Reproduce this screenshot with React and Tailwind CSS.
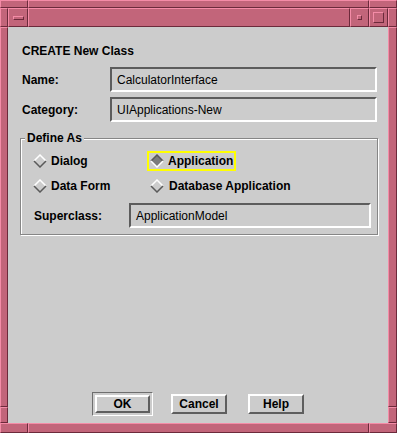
import React from "react";

// Bevel strips for the pink window frame
const frameBevel =
  "border border-t-[#f48ca7] border-l-[#f48ca7] border-b-[#6c2a3b] border-r-[#6c2a3b] bg-[#c2657a]";

const Diamond = ({ selected }) => (
  <svg width="14" height="14" viewBox="0 0 14 14" className="shrink-0">
    <polygon points="7,1 13,7 7,13 1,7" fill={selected ? "#7c7c7c" : "#cccccc"} />
    <polyline
      points="1,7 7,1 13,7"
      fill="none"
      stroke={selected ? "#5a5a5a" : "#ffffff"}
      strokeWidth="1.5"
    />
    <polyline
      points="1,7 7,13 13,7"
      fill="none"
      stroke={selected ? "#ffffff" : "#5a5a5a"}
      strokeWidth="1.5"
    />
  </svg>
);

const Field = ({ value, className = "" }) => (
  <div
    className={`h-[25px] flex items-center pl-[5px] border-2 border-t-[#5c5c5c] border-l-[#5c5c5c] border-b-white border-r-white text-[12px] ${className}`}
  >
    {value}
  </div>
);

const Btn = ({ children, className = "" }) => (
  <div
    className={`flex items-center justify-center border-2 border-t-white border-l-white border-b-[#5e5e5e] border-r-[#5e5e5e] font-bold text-[12px] ${className}`}
  >
    {children}
  </div>
);

export default function App() {
  return (
    <div className="w-[397px] h-[433px] flex flex-col font-['Liberation_Sans',Arial,sans-serif] text-black">
      {/* top frame */}
      <div className="flex h-[8px]">
        <div className={`w-[28px] ${frameBevel}`} />
        <div className={`flex-1 ${frameBevel}`} />
        <div className={`w-[28px] ${frameBevel}`} />
      </div>

      <div className="flex flex-1 min-h-0">
        {/* left frame */}
        <div className="w-[8px] flex flex-col">
          <div className={`h-[19px] ${frameBevel}`} />
          <div className={`flex-1 ${frameBevel}`} />
          <div className={`h-[16px] ${frameBevel}`} />
        </div>

        <div className="w-[380px] flex flex-col">
          {/* title bar */}
          <div className="flex h-[19px]">
            <div className={`w-[20px] flex items-center justify-center ${frameBevel}`}>
              <div className={`w-[11px] h-[4px] ${frameBevel}`} />
            </div>
            <div className={`flex-1 ${frameBevel}`} />
            <div className={`w-[19px] flex items-center justify-center ${frameBevel}`}>
              <div className={`w-[5px] h-[5px] ${frameBevel}`} />
            </div>
            <div className={`w-[19px] flex items-center justify-center ${frameBevel}`}>
              <div className={`w-[11px] h-[11px] ${frameBevel}`} />
            </div>
          </div>

          {/* dialog body */}
          <div className="flex-1 bg-[#cccccc] flex flex-col pl-[12px] pr-[10px] pt-[17px]">
            <div className="pl-[2px] font-bold text-[12px] leading-[14px]">CREATE New Class</div>

            <div className="flex items-center mt-[9px] pl-[2px]">
              <span className="w-[88px] font-bold text-[12px]">Name:</span>
              <Field value="CalculatorInterface" className="flex-1 mr-[1px]" />
            </div>
            <div className="flex items-center mt-[5px] pl-[2px]">
              <span className="w-[88px] font-bold text-[12px]">Category:</span>
              <Field value="UIApplications-New" className="flex-1 mr-[1px]" />
            </div>

            <fieldset className="mt-[9px] p-0 border border-[#868686] shadow-[inset_1px_1px_0_#ffffff,1px_1px_0_#ffffff]">
              <legend className="ml-[4px] px-[2px] bg-[#cccccc] font-bold text-[12px] leading-[14px]">
                Define As
              </legend>
              <div className="pl-[12px] pr-[6px] pb-[6px] text-[12px] font-bold">
                <div className="flex items-center h-[20px] mt-[6px]">
                  <div className="w-[114px] flex items-center gap-[4px]">
                    <Diamond />
                    <span>Dialog</span>
                  </div>
                  <div className="h-[20px] flex items-center gap-[4px] border-2 border-[#ffff00] pl-[1px] pr-[1px]">
                    <Diamond selected />
                    <span>Application</span>
                  </div>
                </div>
                <div className="flex items-center h-[20px] mt-[5px]">
                  <div className="w-[114px] flex items-center gap-[4px]">
                    <Diamond />
                    <span>Data Form</span>
                  </div>
                  <div className="flex items-center gap-[5px] pl-[3px]">
                    <Diamond />
                    <span>Database Application</span>
                  </div>
                </div>
                <div className="flex items-center mt-[7px] pl-[1px]">
                  <span className="w-[95px]">Superclass:</span>
                  <Field value="ApplicationModel" className="flex-1 font-normal" />
                </div>
              </div>
            </fieldset>

            {/* action buttons */}
            <div className="mt-auto mb-[7px] flex items-center justify-center pr-[2px]">
              <div className="p-[2px] border border-t-[#6e6e6e] border-l-[#6e6e6e] border-b-white border-r-white">
                <Btn className="w-[55px] h-[18px]">OK</Btn>
              </div>
              <Btn className="w-[56px] h-[20px] ml-[18px]">Cancel</Btn>
              <Btn className="w-[56px] h-[20px] ml-[21px]">Help</Btn>
            </div>
          </div>
        </div>

        {/* right frame */}
        <div className="w-[9px] flex flex-col">
          <div className={`h-[19px] ${frameBevel}`} />
          <div className={`flex-1 ${frameBevel}`} />
          <div className={`h-[16px] ${frameBevel}`} />
        </div>
      </div>

      {/* bottom frame */}
      <div className="flex h-[10px]">
        <div className={`w-[28px] ${frameBevel}`} />
        <div className={`flex-1 ${frameBevel}`} />
        <div className={`w-[28px] ${frameBevel}`} />
      </div>
    </div>
  );
}
